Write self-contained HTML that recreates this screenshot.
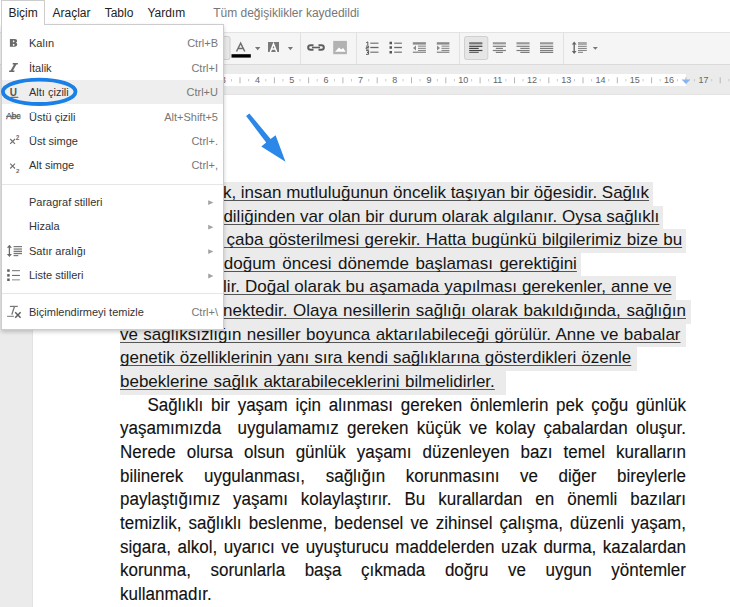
<!DOCTYPE html>
<html><head><meta charset="utf-8">
<style>
*{margin:0;padding:0;box-sizing:border-box}
html,body{width:730px;height:607px;overflow:hidden;background:#fff}
body{position:relative;font-family:"Liberation Sans",sans-serif}
.abs{position:absolute}
#band{left:0;top:64px;width:730px;height:543px;background:#ebebeb}
#ruler{left:120px;top:74px;width:566px;height:12px;background:#fff}
#page{left:33px;top:95px;width:697px;height:512px;background:#fff}
#toolbar{left:0;top:32px;width:730px;height:33px;background:#f5f5f5;border-top:1px solid #e3e3e3;border-bottom:1px solid #dadada}
.mb{top:6px;font-size:12px;line-height:14px;color:#222;white-space:nowrap}
.hl{background:#ebebeb;height:23.5px}
.p1{font-size:17px;color:#151515;white-space:nowrap;line-height:20px;text-align:justify;text-align-last:justify;text-decoration:underline;text-decoration-color:#555;text-decoration-thickness:1px;text-underline-offset:2px;text-decoration-skip-ink:none}
.p2{font-size:17px;color:#111;-webkit-text-stroke:0.12px #111;transform:scaleY(1.06);transform-origin:0 15.9px;white-space:nowrap;line-height:20px;left:120px;width:566px;text-align:justify;text-align-last:justify}
#menu{left:1px;top:24px;width:223px;height:306px;background:#fff;border:1px solid #cdcdcd;box-shadow:0 2px 4px rgba(0,0,0,.2)}
#tab{left:1px;top:0;width:44px;height:25px;background:#fff;border:1px solid #cdcdcd;border-bottom:none}
#mhl{left:2px;top:80px;width:221px;height:23.5px;background:#eeeeee}
.mi{font-size:11px;line-height:13px;color:#333;white-space:nowrap;left:29px}
.sc{font-size:11px;line-height:13px;color:#777;white-space:nowrap;left:100px;width:118px;text-align:right}
.msep{left:2px;width:221px;height:1px;background:#e6e6e6}
svg{position:absolute;left:0;top:0;overflow:visible}
</style></head><body>
<div id="band" class="abs"></div>
<div id="ruler" class="abs"></div>
<svg width="730" height="607" style="font-family:'Liberation Sans',sans-serif">
<path d="M205.8 77.3v6 M240.0 77.3v6 M274.4 77.3v6 M308.6 77.3v6 M342.9 77.3v6 M377.2 77.3v6 M411.5 77.3v6 M445.8 77.3v6 M480.1 77.3v6 M514.5 77.3v6 M548.8 77.3v6 M583.0 77.3v6 M617.3 77.3v6 M651.6 77.3v6 M685.9 77.3v6 M720.2 77.3v6 M754.5 77.3v6" stroke="#b5b5b5" stroke-width="1" fill="none"/>
<path d="M197.2 79v2.4 M214.3 79v2.4 M231.5 79v2.4 M248.6 79v2.4 M265.8 79v2.4 M282.9 79v2.4 M300.1 79v2.4 M317.2 79v2.4 M334.4 79v2.4 M351.5 79v2.4 M368.7 79v2.4 M385.8 79v2.4 M403.0 79v2.4 M420.1 79v2.4 M437.3 79v2.4 M454.4 79v2.4 M471.6 79v2.4 M488.7 79v2.4 M505.9 79v2.4 M523.0 79v2.4 M540.2 79v2.4 M557.3 79v2.4 M574.5 79v2.4 M591.6 79v2.4 M608.8 79v2.4 M625.9 79v2.4 M643.1 79v2.4 M660.2 79v2.4 M677.4 79v2.4 M694.5 79v2.4 M711.7 79v2.4 M728.8 79v2.4 M746.0 79v2.4 M763.1 79v2.4" stroke="#cacaca" stroke-width="1" fill="none"/>
<g font-size="9" fill="#666" text-anchor="middle"><text x="223.2" y="83.3">3</text><text x="257.5" y="83.3">4</text><text x="291.8" y="83.3">5</text><text x="326.1" y="83.3">6</text><text x="360.4" y="83.3">7</text><text x="394.7" y="83.3">8</text><text x="429.0" y="83.3">9</text><text x="463.3" y="83.3">10</text><text x="497.6" y="83.3">11</text><text x="531.9" y="83.3">12</text><text x="566.2" y="83.3">13</text><text x="600.5" y="83.3">14</text><text x="634.8" y="83.3">15</text><text x="669.1" y="83.3">16</text><text x="703.4" y="83.3">17</text><text x="737.7" y="83.3">18</text></g>
<path d="M681.5 79.5h9l-4.5 4.6z" fill="#8ab4f0"/>
</svg>
<div id="page" class="abs"></div>
<div class="abs" style="left:0;top:94px;width:730px;height:1px;background:#e3e3e3"></div>
<div class="abs" style="left:32px;top:95px;width:1px;height:512px;background:#e3e3e3"></div>
<div id="toolbar" class="abs"></div>
<svg width="730" height="607">
<!-- separators -->
<path d="M300.5 33v31 M356.5 33v31 M459.5 33v31 M563.5 33v31" stroke="#e1e1e1" stroke-width="1"/>
<!-- pressed underline button -->
<rect x="206.5" y="36.5" width="23.5" height="23" rx="2" fill="#e8e8e8" stroke="#cfcfcf"/>
<!-- text color A -->
<path d="M236.5 51.5L240.65 43.2L244.8 51.5 M238.2 48.6h4.9" fill="none" stroke="#707070" stroke-width="1.5"/>
<rect x="231.5" y="54.2" width="19.3" height="3.4" fill="#000"/>
<path d="M255 47h5.4l-2.7 3.2z" fill="#777"/>
<!-- highlight A -->
<rect x="268" y="42" width="11" height="10" fill="#7a7a7a"/>
<path d="M270.3 52L273.5 43.8L276.7 52 M271.6 49h3.8" fill="none" stroke="#fff" stroke-width="1.5"/>
<path d="M287.8 47h5.2l-2.6 3.2z" fill="#777"/>
<!-- link -->
<g fill="none" stroke="#5e5e5e" stroke-width="2">
<path d="M313.5 45.2h-3a2.3 2.3 0 0 0 0 4.6h3"/>
<path d="M318.5 45.2h3a2.3 2.3 0 0 1 0 4.6h-3"/>
</g>
<path d="M312 47.5h8" stroke="#5e5e5e" stroke-width="1.6"/>
<!-- image -->
<rect x="333.2" y="40.9" width="13.7" height="13.3" fill="#b2b2b2"/>
<path d="M335 51.8l4-4.2l2.2 2l1.9-1.6l2.6 3.8z" fill="#fff"/>
<!-- numbered list -->
<path d="M366.2 42.7l1.6-0.8v3.6 M366.1 46.1h2.5v1.5h-2.4v1.5h2.6 M366.1 50.6h2.5v1.8h-1.6h1.6v1.9h-2.6" fill="none" stroke="#585858" stroke-width="1"/>
<path d="M370.3 43.2h8.2 M370.3 52.3h8.2" stroke="#8e8e8e" stroke-width="1.5"/><path d="M370.3 47.5h8.2" stroke="#666" stroke-width="1.3"/>
<!-- bulleted list -->
<path d="M389.5 41.8h2.5v2.5h-2.5z M389.5 46.2h2.5v2.5h-2.5z M389.5 51h2.5v2.5h-2.5z" fill="#555"/>
<path d="M394.2 43.2h7.7 M394.2 52.3h7.7" stroke="#8e8e8e" stroke-width="1.5"/><path d="M394.2 47.5h7.7" stroke="#666" stroke-width="1.3"/>
<!-- decrease indent -->
<g fill="#8a8a8a">
<rect x="412.8" y="42.2" width="13.1" height="2.4"/>
<rect x="418" y="45.6" width="7.9" height="1.1"/><rect x="418" y="47.8" width="7.9" height="1.1"/><rect x="418" y="49.9" width="7.9" height="1.1"/>
<rect x="412.8" y="51.6" width="13.1" height="1.3"/>
<path d="M413 48l3-2.6v5.2z"/>
<rect x="436.8" y="42.2" width="12.6" height="2.4"/>
<rect x="441.5" y="45.6" width="7.9" height="1.1"/><rect x="441.5" y="47.8" width="7.9" height="1.1"/><rect x="441.5" y="49.9" width="7.9" height="1.1"/>
<rect x="436.8" y="51.6" width="12.6" height="1.3"/>
<path d="M440 48l-3-2.6v5.2z"/>
</g>
<!-- align left pressed -->
<rect x="464.5" y="36.5" width="23.3" height="23" rx="2" fill="#e6e6e6" stroke="#cfcfcf"/>
<g fill="#444">
<rect x="469.2" y="42.2" width="13.2" height="2.2" fill="#777"/>
<rect x="469.2" y="45.7" width="13.2" height="1.2"/><rect x="469.2" y="47.8" width="9.5" height="1.2"/><rect x="469.2" y="49.9" width="13.2" height="1.2"/><rect x="469.2" y="51.8" width="9.5" height="1.2" fill="#666"/>
</g>
<g fill="#7d7d7d">
<rect x="492.8" y="42.2" width="13.1" height="2.2" fill="#999"/>
<rect x="492.8" y="45.7" width="13.1" height="1.2"/><rect x="495.8" y="47.8" width="7.1" height="1.2"/><rect x="492.8" y="49.9" width="13.1" height="1.2"/><rect x="495.8" y="51.8" width="7.1" height="1.2"/>
<rect x="516.5" y="42.2" width="13.1" height="2.2" fill="#999"/>
<rect x="516.5" y="45.7" width="13.1" height="1.2"/><rect x="520.3" y="47.8" width="9.3" height="1.2"/><rect x="516.5" y="49.9" width="13.1" height="1.2"/><rect x="520.3" y="51.8" width="9.3" height="1.2"/>
<rect x="540" y="42.2" width="13.2" height="2.2" fill="#999"/>
<rect x="540" y="45.7" width="13.2" height="1.2"/><rect x="540" y="47.8" width="13.2" height="1.2"/><rect x="540" y="49.9" width="13.2" height="1.2"/><rect x="540" y="51.8" width="13.2" height="1.2"/>
</g>
<!-- line spacing -->
<path d="M574.2 43v9.5" stroke="#666" stroke-width="1.4"/>
<path d="M571.8 44.5l2.4-3l2.4 3z M571.8 51l2.4 3l2.4-3z" fill="#666"/>
<g fill="#888">
<rect x="578" y="42" width="8.8" height="3" fill="#aaa"/>
<rect x="578" y="45.8" width="8.8" height="1.1"/><rect x="578" y="47.9" width="8.8" height="1.1"/><rect x="578" y="49.9" width="8.8" height="1.1"/><rect x="578" y="51.8" width="5" height="1.1"/>
</g>
<path d="M592.8 47h5l-2.5 2.8z" fill="#777"/>
</svg>

<!-- menubar -->
<div class="abs mb" style="left:52.5px">Araçlar</div>
<div class="abs mb" style="left:104.7px">Tablo</div>
<div class="abs mb" style="left:147.4px">Yardım</div>
<div class="abs mb" style="left:213.2px;color:#777">Tüm değişiklikler kaydedildi</div>

<!-- paragraph 1 highlights -->
<div class="abs hl" style="left:120px;top:182.10px;width:532.6px;height:23.69px"></div>
<div class="abs hl" style="left:120px;top:205.69px;width:543.4px;height:23.69px"></div>
<div class="abs hl" style="left:120px;top:229.28px;width:566.4px;height:23.69px"></div>
<div class="abs hl" style="left:120px;top:252.87px;width:460.9px;height:23.69px"></div>
<div class="abs hl" style="left:120px;top:276.46px;width:556.0px;height:23.69px"></div>
<div class="abs hl" style="left:120px;top:300.05px;width:571.0px;height:23.69px"></div>
<div class="abs hl" style="left:120px;top:323.64px;width:566.0px;height:23.69px"></div>
<div class="abs hl" style="left:120px;top:347.23px;width:516.5px;height:23.69px"></div>
<div class="abs hl" style="left:120px;top:370.82px;width:386.0px;height:23.69px"></div>
<!-- paragraph 1 text -->
<div class="abs p1" style="left:222.9px;top:183.10px;width:425.1px">k, insan mutluluğunun öncelik taşıyan bir öğesidir. Sağlık</div>
<div class="abs p1" style="left:223.4px;top:206.69px;width:435.9px">diliğinden var olan bir durum olarak algılanır. Oysa sağlıklı</div>
<div class="abs p1" style="left:226.5px;top:230.28px;width:455.6px">çaba gösterilmesi gerekir. Hatta bugünkü bilgilerimiz bize bu</div>
<div class="abs p1" style="left:223.8px;top:253.87px;width:353.1px">doğum öncesi dönemde başlaması gerektiğini</div>
<div class="abs p1" style="left:223.1px;top:277.46px;width:448.5px">lir. Doğal olarak bu aşamada yapılması gerekenler, anne ve</div>
<div class="abs p1" style="left:223.1px;top:301.05px;width:462.9px">nektedir. Olaya nesillerin sağlığı olarak bakıldığında, sağlığın</div>
<div class="abs p1" style="left:120.0px;top:324.64px;width:560.5px">ve sağlıksızlığın nesiller boyunca aktarılabileceği görülür. Anne ve babalar</div>
<div class="abs p1" style="left:120.0px;top:348.23px;width:511.3px">genetik özelliklerinin yanı sıra kendi sağlıklarına gösterdikleri özenle</div>
<div class="abs p1" style="left:120.0px;top:371.82px;width:374.8px">bebeklerine sağlık aktarabileceklerini bilmelidirler.</div>
<div class="abs" style="left:222px;top:247.18px;width:5px;height:1px;background:#555"></div>

<!-- paragraph 2 -->
<div class="abs p2" style="top:395.80px;left:147.5px;width:538.5px">Sağlıklı bir yaşam için alınması gereken önlemlerin pek çoğu günlük</div>
<div class="abs p2" style="top:419.46px;left:120px;width:566px">yaşamımızda&nbsp; uygulamamız gereken küçük ve kolay çabalardan oluşur.</div>
<div class="abs p2" style="top:443.12px;left:120px;width:566px">Nerede olursa olsun günlük yaşamı düzenleyen bazı temel kuralların</div>
<div class="abs p2" style="top:466.78px;left:120px;width:566px">bilinerek uygulanması, sağlığın korunmasını ve diğer bireylerle</div>
<div class="abs p2" style="top:490.44px;left:120px;width:566px">paylaştığımız yaşamı kolaylaştırır. Bu kurallardan en önemli bazıları</div>
<div class="abs p2" style="top:514.10px;left:120px;width:566px">temizlik, sağlıklı beslenme, bedensel ve zihinsel çalışma, düzenli yaşam,</div>
<div class="abs p2" style="top:537.76px;left:120px;width:566px">sigara, alkol, uyarıcı ve uyuşturucu maddelerden uzak durma, kazalardan</div>
<div class="abs p2" style="top:561.42px;left:120px;width:566px">korunma, sorunlarla başa çıkmada doğru ve uygun yöntemler</div>
<div class="abs p2" style="top:585.08px;left:120px;width:566px;text-align-last:left">kullanmadır.</div>

<!-- menu -->
<div id="menu" class="abs"></div>
<div id="tab" class="abs"></div>
<div class="abs mb" style="left:8.4px">Biçim</div>
<div id="mhl" class="abs"></div>
<div class="abs msep" style="top:183.5px"></div>
<div class="abs msep" style="top:293px"></div>

<div class="abs mi" style="top:37px">Kalın</div>
<div class="abs mi" style="top:61.5px">İtalik</div>
<div class="abs mi" style="top:86px">Altı çizili</div>
<div class="abs mi" style="top:110.5px">Üstü çizili</div>
<div class="abs mi" style="top:134.8px">Üst simge</div>
<div class="abs mi" style="top:159.2px">Alt simge</div>
<div class="abs mi" style="top:195.6px">Paragraf stilleri</div>
<div class="abs mi" style="top:220.2px">Hizala</div>
<div class="abs mi" style="top:244.9px">Satır aralığı</div>
<div class="abs mi" style="top:269.4px">Liste stilleri</div>
<div class="abs mi" style="top:306px">Biçimlendirmeyi temizle</div>

<div class="abs sc" style="top:37px">Ctrl+B</div>
<div class="abs sc" style="top:61.5px">Ctrl+I</div>
<div class="abs sc" style="top:86px">Ctrl+U</div>
<div class="abs sc" style="top:110.5px">Alt+Shift+5</div>
<div class="abs sc" style="top:134.8px">Ctrl+.</div>
<div class="abs sc" style="top:159.2px">Ctrl+,</div>
<div class="abs sc" style="top:306px">Ctrl+\</div>

<svg width="730" height="607">
<path d="M208.2 200.2l5.2 2.4l-5.2 2.4z M208.2 224.8l5.2 2.4l-5.2 2.4z M208.2 249.2l5.2 2.4l-5.2 2.4z M208.2 273.6l5.2 2.4l-5.2 2.4z" fill="#a2a2a2"/>
<!-- B -->
<path fill="#6b6b6b" fill-rule="evenodd" d="M9.9 39h4.9c1.5 0 2.3 0.8 2.3 1.9c0 0.8-0.5 1.3-1.1 1.6c0.8 0.3 1.2 0.9 1.2 1.8c0 1.4-1 2.5-2.6 2.5h-4.7z M12.9 40.6v1.7h0.9c0.4 0 0.6-0.4 0.6-0.85c0-0.45-0.2-0.85-0.6-0.85z M12.9 43.9v1.8h1c0.45 0 0.65-0.4 0.65-0.9c0-0.5-0.2-0.9-0.65-0.9z"/>
<!-- I -->
<path fill="#6b6b6b" d="M12.8 63h5.2l-0.3 1.4h-1.3l-3.4 6h1.6l-0.3 1.5h-5.3l0.3-1.5h1.3l3.4-6h-1.5z"/>
<!-- U -->
<text x="9.8" y="95.6" font-family="Liberation Sans" font-weight="bold" font-size="10" fill="#555">U</text>
<rect x="10.5" y="96.8" width="7.8" height="1" fill="#555"/>
<!-- Abc -->
<text x="5.9" y="118.8" font-family="Liberation Sans" font-size="8.9" fill="#5c5c5c" letter-spacing="-0.2" textLength="14.6" stroke="#5c5c5c" stroke-width="0.25">Abc</text>
<rect x="6" y="115.8" width="14.6" height="1" fill="#666"/>
<!-- x2 -->
<path d="M10.2 139l4.8 4.9 M15 139l-4.8 4.9" stroke="#707070" stroke-width="1.1"/>
<text x="15.8" y="140.2" font-family="Liberation Sans" font-weight="bold" font-size="6.4" fill="#6a6a6a">2</text>
<path d="M10.2 163.6l4.8 4.9 M15 163.6l-4.8 4.9" stroke="#707070" stroke-width="1.1"/>
<text x="15.9" y="172.7" font-family="Liberation Sans" font-weight="bold" font-size="6.2" fill="#6a6a6a">2</text>
<!-- line spacing -->
<path d="M9.4 247v8" stroke="#6a6a6a" stroke-width="1.3"/>
<path d="M6.9 247.8l2.5-3l2.5 3z M6.9 254l2.5 3l2.5-3z" fill="#6a6a6a"/>
<g fill="#7a7a7a"><rect x="13.6" y="246" width="8.4" height="1.2"/><rect x="13.6" y="248.1" width="8.4" height="2.4" fill="#a8a8a8"/><rect x="13.6" y="251" width="8.4" height="1.2"/><rect x="13.6" y="253" width="8.4" height="1.2"/><rect x="13.6" y="255" width="4.7" height="1.2"/></g>
<!-- list -->
<g fill="#5e5e5e"><rect x="7.2" y="269.3" width="2.5" height="2.5"/><rect x="7.2" y="274.1" width="2.5" height="2.5"/><rect x="7.2" y="278.5" width="2.5" height="2.5"/></g>
<g fill="#7e7e7e"><rect x="12" y="270.1" width="7.9" height="1.1"/><rect x="12" y="274.9" width="7.9" height="1.1" fill="#6e6e6e"/><rect x="12" y="279.3" width="7.9" height="1.1" fill="#959595"/></g>
<!-- Tx -->
<rect x="9.9" y="305.8" width="7.9" height="1.2" fill="#777"/>
<path d="M14.4 306.8L11.8 314.6" stroke="#777" stroke-width="1.3"/>
<rect x="7.1" y="315.8" width="6.8" height="1" fill="#777"/>
<path d="M15.2 312.3l5.4 5.4 M20.6 312.3l-5.4 5.4" stroke="#5e5e5e" stroke-width="1.5"/>
<!-- ellipse -->
<ellipse cx="39.2" cy="91.8" rx="36.3" ry="12.2" fill="none" stroke="#1a80e6" stroke-width="3.8"/>
<!-- arrow -->
<path d="M246.1 115.9 L249.4 113.4 L270.6 139.1 L275.6 135.2 L285.5 161.8 L261.3 146.5 L266.2 142.6 Z" fill="#2b87e8"/>
</svg>
</body></html>
